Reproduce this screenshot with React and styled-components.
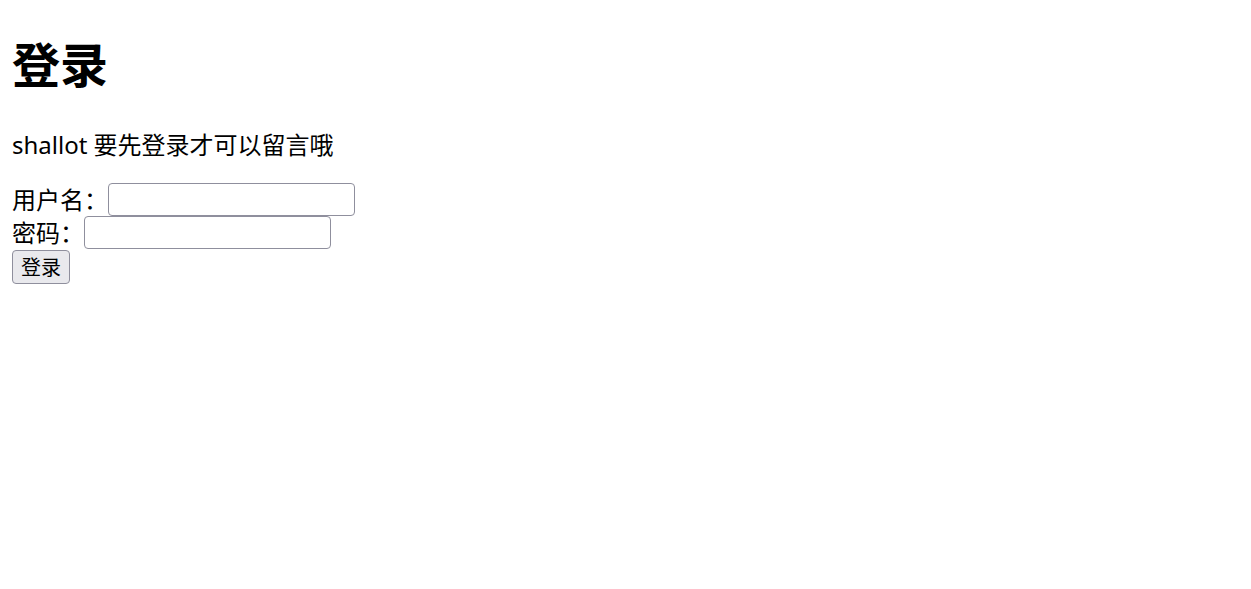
import React, { useState } from 'react';
import styled, { createGlobalStyle } from 'styled-components';

const GlobalStyle = createGlobalStyle`
  body {
    margin: 0;
    background: #fff;
    color: #000;
    font-family: "Noto Sans", "Noto Sans CJK SC", sans-serif;
  }
`;

const Page = styled.div`
  padding: 0 12px;
`;

const Title = styled.h1`
  margin: 34px 0 32px;
  font-size: 48px;
  line-height: 62px;
  font-weight: 700;
`;

const Hint = styled.p`
  margin: 0 0 22px;
  font-size: 24px;
  line-height: 33px;
`;

const Form = styled.form`
  display: flex;
  flex-direction: column;
  align-items: flex-start;
`;

const Row = styled.div`
  display: flex;
  align-items: center;
  height: 33px;
`;

const Label = styled.label`
  font-size: 24px;
  line-height: 33px;
`;

const Input = styled.input`
  box-sizing: border-box;
  width: 247px;
  height: 33px;
  padding: 2px 4px;
  border: 1.5px solid #8f8f9d;
  border-radius: 4px;
  background: #fff;
  font-size: 20px;
  font-family: inherit;
  outline: none;
`;

const Button = styled.button`
  box-sizing: border-box;
  margin-top: 1px;
  width: 58px;
  height: 34px;
  padding: 0;
  border: 1.5px solid #8f8f9d;
  border-radius: 4px;
  background: #e9e9ed;
  color: #000;
  font-size: 20px;
  font-family: "Noto Sans CJK SC", sans-serif;
  line-height: 1;
  cursor: pointer;
`;

const App = () => {
  const [username, setUsername] = useState('');
  const [password, setPassword] = useState('');

  return (
    <Page>
      <GlobalStyle />
      <Title>登录</Title>
      <Hint>shallot 要先登录才可以留言哦</Hint>
      <Form onSubmit={(e) => e.preventDefault()}>
        <Row>
          <Label htmlFor="username">用户名：</Label>
          <Input id="username" type="text" value={username} onChange={(e) => setUsername(e.target.value)} />
        </Row>
        <Row>
          <Label htmlFor="password">密码：</Label>
          <Input id="password" type="password" value={password} onChange={(e) => setPassword(e.target.value)} />
        </Row>
        <Button type="submit">登录</Button>
      </Form>
    </Page>
  );
};

export default App;
